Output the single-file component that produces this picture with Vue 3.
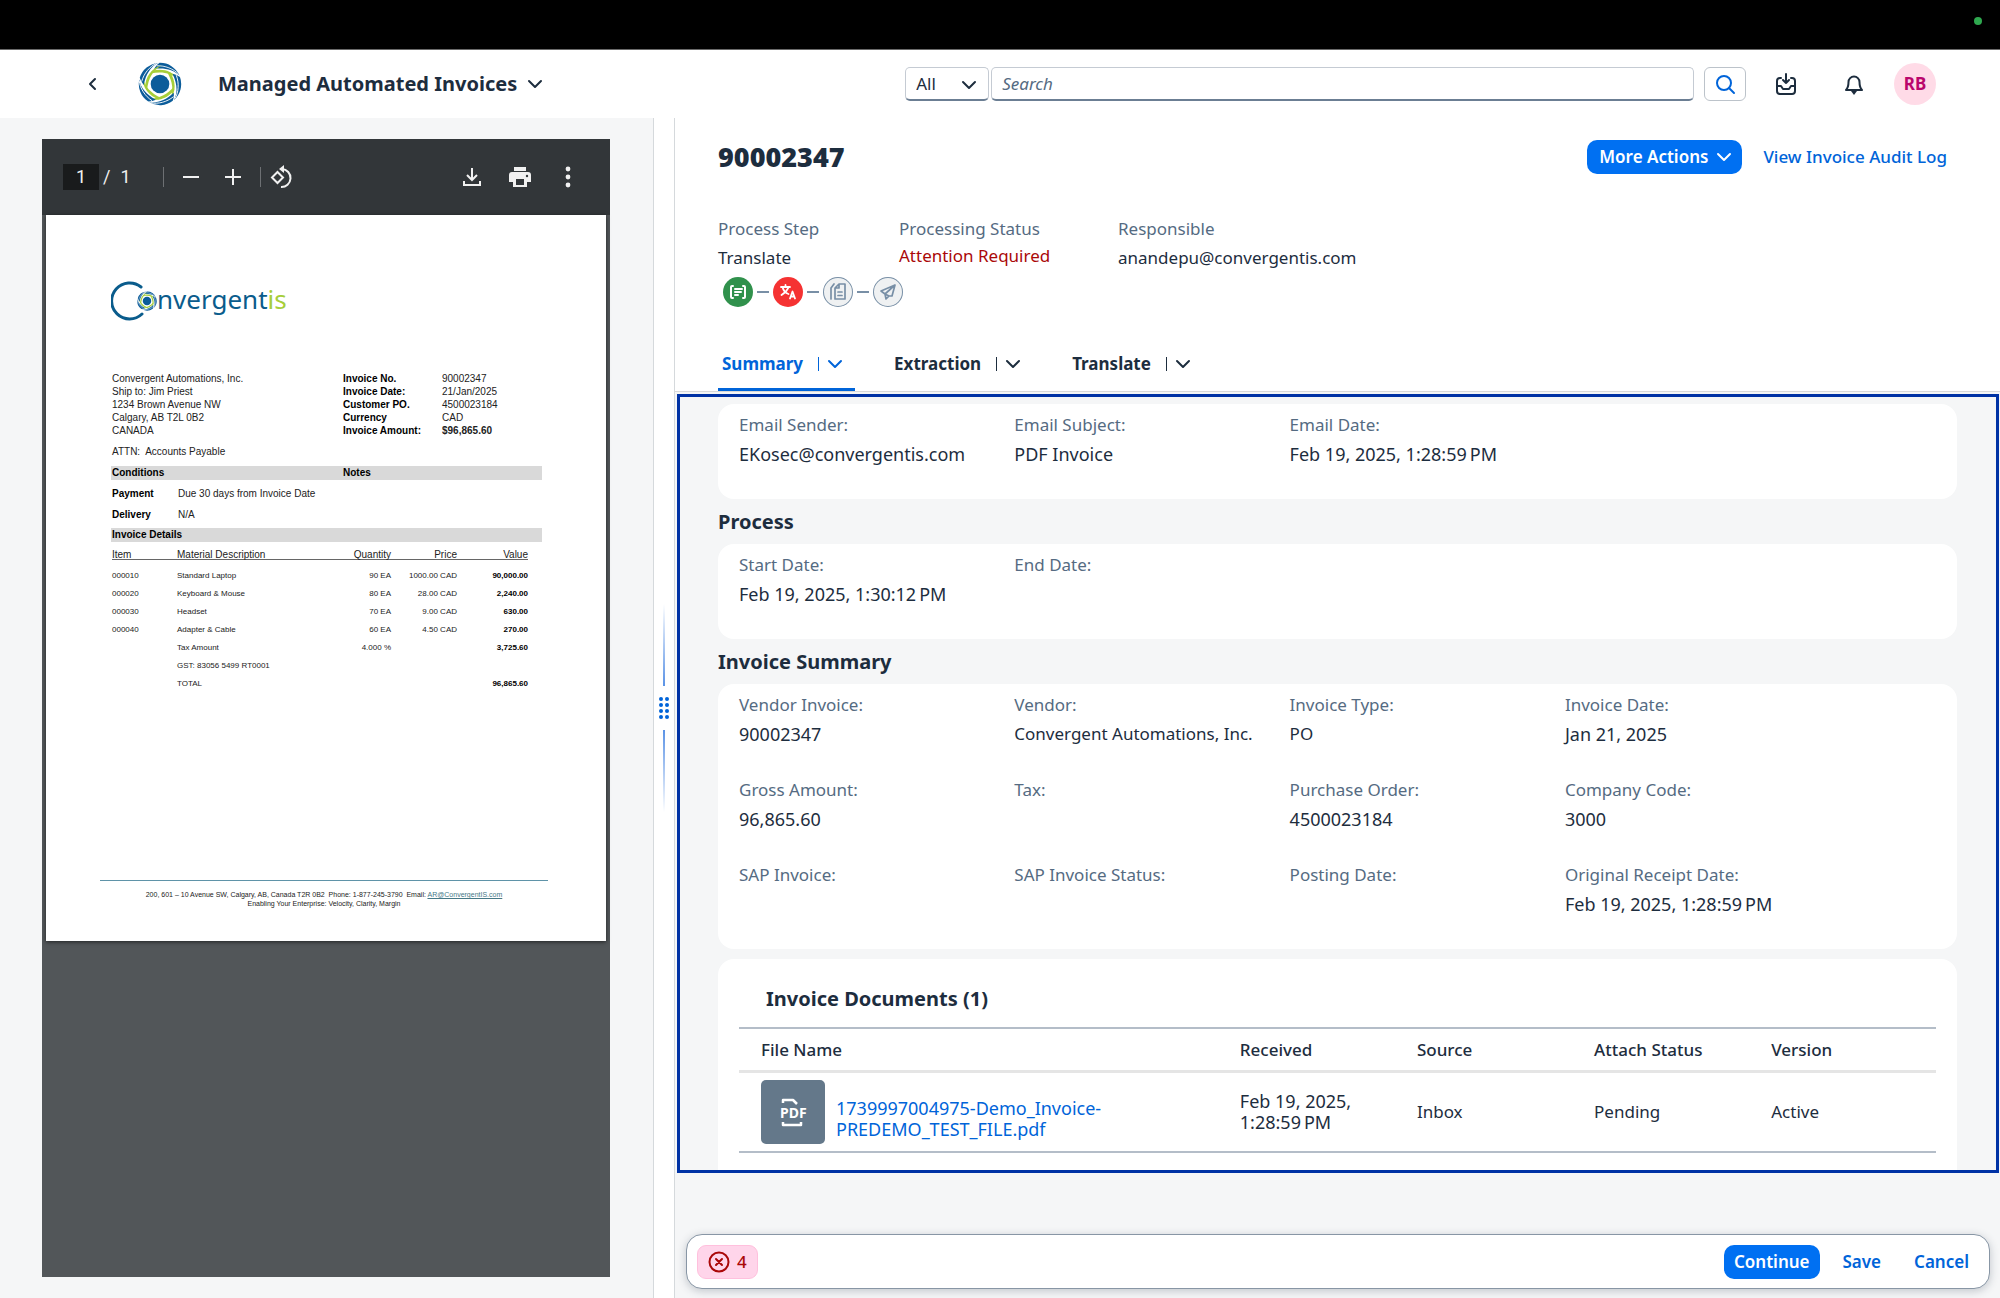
<script setup>
const process = [
  { label: 'Start Date:', value: 'Feb 19, 2025, 1:30:12\u202fPM', large: true },
  { label: 'End Date:', value: '' },
]
const email = [
  { label: 'Email Sender:', value: 'EKosec@convergentis.com', large: true },
  { label: 'Email Subject:', value: 'PDF Invoice', large: true },
  { label: 'Email Date:', value: 'Feb 19, 2025, 1:28:59\u202fPM', large: true },
]
const summary = [
  { label: 'Vendor Invoice:', value: '90002347', large: true },
  { label: 'Vendor:', value: 'Convergent Automations, Inc.' },
  { label: 'Invoice Type:', value: 'PO' },
  { label: 'Invoice Date:', value: 'Jan 21, 2025', large: true },
  { label: 'Gross Amount:', value: '96,865.60', large: true },
  { label: 'Tax:', value: '' },
  { label: 'Purchase Order:', value: '4500023184', large: true },
  { label: 'Company Code:', value: '3000', large: true },
  { label: 'SAP Invoice:', value: '' },
  { label: 'SAP Invoice Status:', value: '' },
  { label: 'Posting Date:', value: '' },
  { label: 'Original Receipt Date:', value: 'Feb 19, 2025, 1:28:59\u202fPM', large: true },
]
const sections = [
  { title: '', fields: email },
  { title: 'Process', fields: process },
  { title: 'Invoice Summary', fields: summary },
]
const tabs = ['Summary', 'Extraction', 'Translate']
const blades = [0, 72, 144, 216, 288]
const address = [
  'Convergent Automations, Inc.',
  'Ship to: Jim Priest',
  '1234 Brown Avenue NW',
  'Calgary, AB T2L 0B2',
  'CANADA',
]
const facts = [
  ['Invoice No.', '90002347'],
  ['Invoice Date:', '21/Jan/2025'],
  ['Customer PO.', '4500023184'],
  ['Currency', 'CAD'],
  ['Invoice Amount:', '$96,865.60'],
]
const items = [
  ['000010', 'Standard Laptop', '90 EA', '1000.00 CAD', '90,000.00'],
  ['000020', 'Keyboard & Mouse', '80 EA', '28.00 CAD', '2,240.00'],
  ['000030', 'Headset', '70 EA', '9.00 CAD', '630.00'],
  ['000040', 'Adapter & Cable', '60 EA', '4.50 CAD', '270.00'],
  ['', 'Tax Amount', '4.000 %', '', '3,725.60'],
  ['', 'GST: 83056 5499 RT0001', '', '', ''],
  ['', 'TOTAL', '', '', '96,865.60'],
]
</script>

<template>
  <div class="app">
    <svg width="0" height="0" class="defs" aria-hidden="true">
      <symbol id="chev" viewBox="0 0 16 16">
        <path d="M2 5l6 6 6-6" fill="none" stroke="currentColor" stroke-width="2" stroke-linecap="round" stroke-linejoin="round" />
      </symbol>
      <symbol id="swirl" viewBox="-52 -52 104 104">
        <g v-for="a in blades" :key="a" :transform="`rotate(${a})`">
          <path d="M-1 -50A50 50 0 0 1 46 -20C32 -34 12 -39 -14 -36Q-9 -45 -1 -50Z" fill="#0b5c9a" />
          <path d="M-8 -43C12 -44 32 -36 44 -23" fill="none" stroke="#fff" stroke-width="2" />
          <path d="M-19 -31C4 -38 30 -32 43 -10C26 -27 4 -30 -22 -25Z" fill="#a6ce39" />
        </g>
        <circle r="22" fill="#0b5c9a" />
      </symbol>
    </svg>

    <div class="menubar"><span class="dot"></span></div>

    <header class="shell">
      <div class="brand">
        <button class="icon-btn" aria-label="Back">
          <svg width="16" height="16" viewBox="0 0 16 16"><path d="M11 3L6 8l5 5" fill="none" stroke="currentColor" stroke-width="2" stroke-linecap="round" stroke-linejoin="round" /></svg>
        </button>
        <svg class="logo" width="44" height="44"><use href="#swirl" /></svg>
        <button class="app-title">Managed Automated Invoices <svg width="16" height="16"><use href="#chev" /></svg></button>
      </div>
      <div class="search">
        <div class="scope">
          <select aria-label="Search scope"><option>All</option></select>
          <svg width="16" height="16"><use href="#chev" /></svg>
        </div>
        <input type="text" placeholder="Search" aria-label="Search" />
        <button class="go" aria-label="Run search">
          <svg width="22" height="22" viewBox="0 0 22 22" fill="none" stroke="currentColor" stroke-width="2" stroke-linecap="round"><circle cx="10" cy="10" r="7" /><path d="M15 15l5 5" /></svg>
        </button>
      </div>
      <button class="icon-btn inbox" aria-label="Inbox">
        <svg width="20" height="24" viewBox="0 0 20 24" fill="none" stroke="currentColor" stroke-width="2" stroke-linecap="round" stroke-linejoin="round"><path d="M5 6H4a3 3 0 0 0-3 3v10a3 3 0 0 0 3 3h12a3 3 0 0 0 3-3V9a3 3 0 0 0-3-3h-1M10 2v9M7 8l3 3 3-3M1 14h4l2 3h6l2-3h4" /></svg>
      </button>
      <button class="icon-btn bell" aria-label="Notifications">
        <svg width="20" height="22" viewBox="0 0 20 22"><path d="M2 17c2-2 2.500-4 2.500-8a5.500 5.500 0 0 1 11 0c0 4 .5 6 2.500 8z" fill="none" stroke="currentColor" stroke-width="2" stroke-linejoin="round" /><path d="M7 18h6l-3 4z" fill="currentColor" /></svg>
      </button>
      <button class="avatar" aria-label="Profile">RB</button>
    </header>

    <main class="main">
      <section class="left">
        <div class="viewer">
          <div class="toolbar">
            <input class="page-no" value="1" aria-label="Page number" />
            <div class="page-of"><span>/</span><span>1</span></div>
            <i class="sep"></i>
            <div class="zoomers">
              <button aria-label="Zoom out"><svg width="24" height="24" viewBox="0 0 24 24"><path d="M4 12h16" stroke="currentColor" stroke-width="2" /></svg></button>
              <button aria-label="Zoom in"><svg width="24" height="24" viewBox="0 0 24 24"><path d="M4 12h16M12 4v16" stroke="currentColor" stroke-width="2" /></svg></button>
            </div>
            <i class="sep"></i>
            <button class="rotate" aria-label="Rotate"><svg width="24" height="24" viewBox="0 0 24 24" fill="none" stroke="currentColor" stroke-width="2"><path d="M7.500 7L13 12.500 7.500 18 2 12.500z" /><path d="M12 4a9 9 0 1 1-1 18" /><path d="M14 0v8L9 4z" fill="currentColor" stroke="none" /></svg></button>
            <div class="tools">
              <button aria-label="Download"><svg width="24" height="24" viewBox="0 0 24 24" fill="none" stroke="currentColor" stroke-width="2"><path d="M12 3v12M7 10l5 5 5-5M4 16v4h16v-4" /></svg></button>
              <button aria-label="Print"><svg width="24" height="24" viewBox="0 0 24 24"><path d="M6 2h12v4H6zM4 7h16a3 3 0 0 1 3 3v7h-4v5H5v-5H1v-7a3 3 0 0 1 3-3z" fill="currentColor" /><path d="M8 14h8v6H8z" fill="#323639" /><circle cx="19" cy="11" r="1.200" fill="#323639" /></svg></button>
              <button aria-label="More"><svg width="24" height="24" viewBox="0 0 24 24" fill="currentColor"><circle cx="12" cy="4" r="2.400" /><circle cx="12" cy="12" r="2.400" /><circle cx="12" cy="20" r="2.400" /></svg></button>
            </div>
          </div>

          <article class="paper">
            <svg class="wordmark" width="180" height="46" viewBox="0 0 180 46">
              <path d="M30 9A18 18 0 1 0 31 36" fill="none" stroke="#0a5c8c" stroke-width="3" stroke-linecap="round" />
              <use href="#swirl" x="26" y="13" width="20" height="20" />
              <text x="46" y="31" fill="#0a5c8c">nvergent<tspan fill="#a6ce39">is</tspan></text>
            </svg>
            <div class="top">
              <div><p v-for="l in address" :key="l">{{ l }}</p></div>
              <dl>
                <template v-for="(f, i) in facts" :key="f[0]"><dt>{{ f[0] }}</dt><dd :class="{ strong: i === 4 }">{{ f[1] }}</dd></template>
              </dl>
            </div>
            <p class="attn">ATTN:&nbsp; Accounts Payable</p>
            <div class="band"><b>Conditions</b><b>Notes</b></div>
            <p class="term"><b>Payment</b><span>Due 30 days from Invoice Date</span></p>
            <p class="term"><b>Delivery</b><span>N/A</span></p>
            <div class="band details"><b>Invoice Details</b></div>
            <table class="lines">
              <thead><tr><th>Item</th><th>Material Description</th><th>Quantity</th><th>Price</th><th>Value</th></tr></thead>
              <tbody><tr v-for="r in items" :key="r[1]"><td v-for="(c, i) in r" :key="i">{{ c }}</td></tr></tbody>
            </table>
            <footer>
              200, 601 – 10 Avenue SW, Calgary, AB, Canada T2R 0B2&nbsp; Phone: 1-877-245-3790&nbsp; Email: <a href="#">AR@ConvergentIS.com</a><br />
              Enabling Your Enterprise: Velocity, Clarity, Margin
            </footer>
          </article>
        </div>
      </section>

      <div class="splitter">
        <i class="beam up"></i>
        <div class="grip"><i v-for="n in 8" :key="n"></i></div>
        <i class="beam down"></i>
      </div>

      <section class="right">
        <div class="head">
          <div class="title-row">
            <h1>90002347</h1>
            <button class="btn primary more">More Actions <svg width="16" height="16"><use href="#chev" /></svg></button>
            <a href="#" class="audit">View Invoice Audit Log</a>
          </div>
          <div class="info">
            <div><div class="label">Process Step</div><div class="value">Translate</div></div>
            <div><div class="label">Processing Status</div><div class="value error">Attention Required</div></div>
            <div><div class="label">Responsible</div><div class="value">anandepu@convergentis.com</div></div>
          </div>
          <div class="steps">
            <svg class="done" viewBox="0 0 30 30"><g fill="none" stroke="currentColor" stroke-width="2" stroke-linecap="round"><path d="M10 9H9a1 1 0 0 0-1 1v10a1 1 0 0 0 1 1h1M20 9h1a1 1 0 0 1 1 1v10a1 1 0 0 1-1 1h-1M12 12h7M12 15h6M12 18h3" /></g></svg>
            <i></i>
            <svg class="failed" viewBox="0 0 30 30"><g fill="none" stroke="currentColor" stroke-width="1.800" stroke-linecap="round" stroke-linejoin="round"><path d="M8 10h9M12.500 8v2M9.500 10c1 4 3 6 6 7M15.500 10c-1 4-4 6-7 8M17 21.500l2.500-7 2.500 7M18 19.500h3" /></g></svg>
            <i></i>
            <svg class="todo" viewBox="0 0 30 30"><g fill="none" stroke="currentColor" stroke-width="1.700" stroke-linecap="round" stroke-linejoin="round"><path d="M16 7h6v15H12V11zM16 7v4h-4M15 15h4M15 18.500h4M8 22V11l3-4" /></g></svg>
            <i></i>
            <svg class="todo" viewBox="0 0 30 30"><g fill="none" stroke="currentColor" stroke-width="1.700" stroke-linejoin="round"><path d="M22 8L8 14l4 3 1 5 3-3h3zM22 8L12 17l4 2" /></g></svg>
          </div>
          <nav class="tabs">
            <button v-for="(t, i) in tabs" :key="t" :class="['tab', { active: i === 0 }]">{{ t }}<i></i><svg width="16" height="16"><use href="#chev" /></svg></button>
          </nav>
        </div>

        <div class="content">
          <template v-for="s in sections" :key="s.title">
            <h2 v-if="s.title">{{ s.title }}</h2>
            <div class="card">
              <div v-for="f in s.fields" :key="f.label" class="field">
                <div class="label">{{ f.label }}</div>
                <div :class="['value', { large: f.large }]">{{ f.value }}</div>
              </div>
            </div>
          </template>
          <div class="card docs">
            <h2>Invoice Documents (1)</h2>
            <table>
              <thead><tr><th>File Name</th><th>Received</th><th>Source</th><th>Attach Status</th><th>Version</th></tr></thead>
              <tbody>
                <tr>
                  <td>
                    <div class="file">
                      <span class="tile">
                        <svg width="30" height="32" viewBox="0 0 30 32"><path d="M5 7V4h10l4 4M5 26v3h18v-3" fill="none" stroke="#fff" stroke-width="2.500" stroke-linejoin="round" /><text x="2" y="22" fill="#fff">PDF</text></svg>
                      </span>
                      <a href="#" class="large">1739997004975-Demo_Invoice-PREDEMO_TEST_FILE.pdf</a>
                    </div>
                  </td>
                  <td class="large">Feb 19, 2025, 1:28:59&#8239;PM</td><td>Inbox</td><td>Pending</td><td>Active</td>
                </tr>
              </tbody>
            </table>
          </div>
        </div>

        <div class="actions">
          <button class="errors">
            <svg width="22" height="22" viewBox="0 0 22 22" fill="none" stroke="currentColor" stroke-width="2" stroke-linecap="round"><circle cx="11" cy="11" r="9.500" /><path d="M8 8l6 6M14 8l-6 6" /></svg>4
          </button>
          <button class="btn primary">Continue</button>
          <button class="btn">Save</button>
          <button class="btn">Cancel</button>
        </div>
      </section>
    </main>
  </div>
</template>

<style>
body { background: #f5f6f7; }
</style>

<style scoped>
* { box-sizing: border-box; }
.app { min-height: 100vh; display: flex; flex-direction: column; font: 17px/24px "Noto Sans", "Liberation Sans", sans-serif; color: #1d2d3e; }
.defs { position: absolute; }
button, input, select { font: inherit; color: inherit; margin: 0; }
button { background: none; border: 0; padding: 0; cursor: pointer; }
svg { display: block; flex: none; }
h1, h2, p, dl, dd { margin: 0; }
a { color: #0064d9; text-decoration: none; }

.menubar { height: 50px; background: #000; border-bottom: 1px solid #6a6a6a; display: flex; justify-content: flex-end; padding: 17px 18px; }
.dot { width: 8px; height: 8px; border-radius: 50%; background: #2fa84f; }

.shell { height: 68px; background: #fff; display: flex; align-items: center; padding: 0 64px 0 84px; }
.brand { flex: 1; display: flex; align-items: center; }
.logo { margin: 0 36px 0 38px; }
.app-title { display: flex; align-items: center; gap: 10px; font-size: 20px; font-weight: 700; white-space: nowrap; }
.search { flex: 0 0 45.4%; display: flex; gap: 2px; }
.scope { position: relative; width: 84px; }
.scope select { width: 100%; height: 34px; appearance: none; background: #fff; padding: 0 10px; outline: 0; }
.scope svg { position: absolute; right: 12px; top: 10px; pointer-events: none; }
.scope select, .search input { border: 1px solid #c5cbd3; border-bottom: 2px solid #6b7e93; border-radius: 5px; }
.search input { flex: 1; min-width: 0; height: 34px; padding: 0 10px; outline: 0; }
.search input::placeholder { color: #556b82; font-style: italic; opacity: 1; }
.go { width: 42px; height: 34px; margin-left: 8px; border: 1px solid #bcc3ca; border-radius: 6px; color: #0064d9; display: flex; align-items: center; justify-content: center; }
.inbox { margin-left: 30px; }
.bell { margin: 0 30px 0 48px; }
.avatar { width: 42px; height: 42px; border-radius: 50%; background: #ffdbe7; color: #ba066c; font-weight: 700; }

.main { flex: 1; display: flex; }
.left { flex: 0 0 33%; max-width: 653px; background: #f5f6f7; padding: 21px 43px 21px 42px; display: flex; }
.viewer { flex: 1; min-width: 0; background: #525659; }
.toolbar { height: 76px; background: #323639; color: #f1f1f1; display: flex; align-items: center; padding: 0 30px 0 21px; font: 18px/26px Roboto, sans-serif; }
.page-no { width: 36px; height: 26px; border: 0; padding: 0; background: #191b1c; text-align: center; }
.page-of { display: flex; gap: 10px; width: 64px; padding-left: 4px; }
.sep { width: 1px; height: 20px; background: #6d7073; }
.zoomers { display: flex; gap: 18px; margin: 0 15px; }
.rotate { margin-left: 9px; }
.tools { margin-left: auto; display: flex; gap: 24px; }

.paper { margin: 0 4px; height: 726px; background: #fff; box-shadow: 0 1px 4px rgba(0, 0, 0, .6); color: #222; font: 10px/14px "Liberation Sans", Arial, sans-serif; padding: 63px 64px 0 65px; display: flex; flex-direction: column; }
.paper b, .paper dt { font-weight: 700; color: #000; }
.wordmark text { font: 26px "Noto Sans", sans-serif; }
.top { display: flex; margin-top: 48px; line-height: 13px; padding-left: 1px; }
.top > div { width: 231px; }
.top dl { display: grid; grid-template-columns: 99px 1fr; }
.strong { font-weight: 700; }
.attn { margin: 8px 0 7px; padding-left: 1px; }
.band { display: flex; height: 14px; background: #d9d9d9; padding-left: 1px; }
.band b { flex: none; width: 231px; }
.term { display: flex; padding-left: 1px; margin-top: 7px; }
.term b { width: 66px; }
.details { margin-top: 6px; }
.lines { width: 416px; margin: 5px 0 0 1px; border-collapse: collapse; table-layout: fixed; font-size: 8px; line-height: 18px; }
.lines th { font-size: 10px; font-weight: 400; text-align: left; vertical-align: bottom; line-height: 8px; height: 12px; border-bottom: 1px solid #666; padding: 0; }
.lines td { padding: 0; height: 18px; }
.lines th:nth-child(1) { width: 65px; }
.lines th:nth-child(2) { width: 133px; }
.lines th:nth-child(3) { width: 81px; }
.lines th:nth-child(4) { width: 66px; }
.lines th:nth-child(n+3), .lines td:nth-child(n+3) { text-align: right; }
.lines tbody::before { content: ""; display: block; height: 7px; }
.lines td:last-child { font-weight: 700; color: #000; }
.paper footer { margin: auto -6px 33px -11px; border-top: 1px solid #5f93a8; padding-top: 9px; text-align: center; font-size: 7px; line-height: 9px; white-space: nowrap; }
.paper footer a { color: #467886; text-decoration: underline; }

.splitter { flex: none; width: 22px; background: #fff; border: solid #d5d9dc; border-width: 0 1px; display: flex; flex-direction: column; align-items: center; justify-content: center; gap: 11px; }
.beam { width: 2px; height: 82px; }
.up { background: linear-gradient(transparent, #5b93e6); }
.down { background: linear-gradient(#5b93e6, transparent); }
.grip { display: grid; grid-template-columns: 4px 4px; gap: 2px; }
.grip i { width: 4px; height: 4px; border-radius: 50%; background: #0064d9; }

.right { flex: 1; min-width: 0; display: flex; flex-direction: column; background: #f5f6f7; }
.head { background: #fff; padding: 22px 53px 0 43px; border-bottom: 1px solid #d9d9d9; }
.title-row { display: flex; align-items: center; }
h1 { flex: 1; font-size: 27px; line-height: 34px; font-weight: 900; }
.btn { height: 34px; padding: 0 10px; border-radius: 10px; color: #0064d9; font-weight: 600; }
.btn.primary { background: #0070f2; color: #fff; }
.more { display: flex; align-items: center; gap: 8px; padding: 0 10px 0 12px; margin-right: 21px; }
.audit { font-weight: 500; }
.label { color: #556b82; }
.value { min-height: 24px; margin-top: 5px; white-space: nowrap; }
.large { font-size: 18px; }
.info { display: grid; grid-template-columns: 181px 219px 1fr; margin-top: 43px; }
.value.error { color: #aa0808; margin-top: 3px; }
.steps { display: flex; align-items: center; margin-top: 7px; padding-left: 5px; }
.steps svg { width: 30px; height: 30px; border-radius: 50%; color: #fff; }
.steps i { width: 12px; height: 2px; margin: 0 4px; background: #788fa6; }
.steps .done { background: #30914c; }
.steps .failed { background: #f53232; }
.steps .todo { background: #eff1f2; color: #788fa6; box-shadow: inset 0 0 0 1px #788fa6; }
.tabs { display: flex; gap: 35px; margin-top: 33px; }
.tab { display: flex; align-items: center; padding: 0 12px 0 4px; height: 51px; border-bottom: 3px solid transparent; font-weight: 700; }
.tab i { width: 1px; height: 14px; margin: 0 8px 0 15px; background: currentColor; }
.tab.active { color: #0064d9; border-color: #0064d9; }

.content { margin: 2px 1px 0 2px; border: 3px solid #0032a5; padding: 7px 39px 0 38px; }
h2 { font-size: 20px; line-height: 45px; font-weight: 700; }
.card { background: #fff; border-radius: 16px; padding: 9px 21px 1px; display: grid; grid-template-columns: repeat(4, 23%); }
.field { padding-bottom: 32px; }
.docs { display: block; margin-top: 10px; padding: 12px 21px 17px; border-radius: 16px 16px 0 0; }
.docs h2 { line-height: 56px; padding-left: 27px; }
.docs table { width: 100%; table-layout: fixed; border-collapse: collapse; line-height: 21px; border: solid #b4bdc8; border-width: 2px 0; }
.docs th { height: 43px; text-align: left; font-weight: 500; padding: 0 0 0 22px; width: 14.8%; border-bottom: 3px solid #e5e5e5; }
.docs th:first-child { width: 40%; }
.docs th:last-child { width: auto; }
.docs td { height: 81px; padding: 0 0 0 22px; }
.file { display: flex; align-items: center; gap: 11px; }
.file a { padding-top: 15px; }
.tile { flex: none; width: 64px; height: 64px; border-radius: 5px; background: #64788a; display: flex; align-items: center; justify-content: center; }
.tile text { font: 700 14px "Noto Sans", sans-serif; }

.actions { margin: auto 10px 9px 11px; height: 55px; background: #fff; border: 1px solid #8896a5; border-radius: 16px; box-shadow: 0 2px 8px rgba(34, 53, 72, .25); display: flex; align-items: center; gap: 13px; padding: 0 10px; }
.errors { margin-right: auto; height: 34px; padding: 0 10px; display: flex; align-items: center; gap: 7px; border-radius: 9px; background: #ffd5ea; border: 1px solid #ffc0dd; color: #aa0808; font-weight: 500; }
</style>
